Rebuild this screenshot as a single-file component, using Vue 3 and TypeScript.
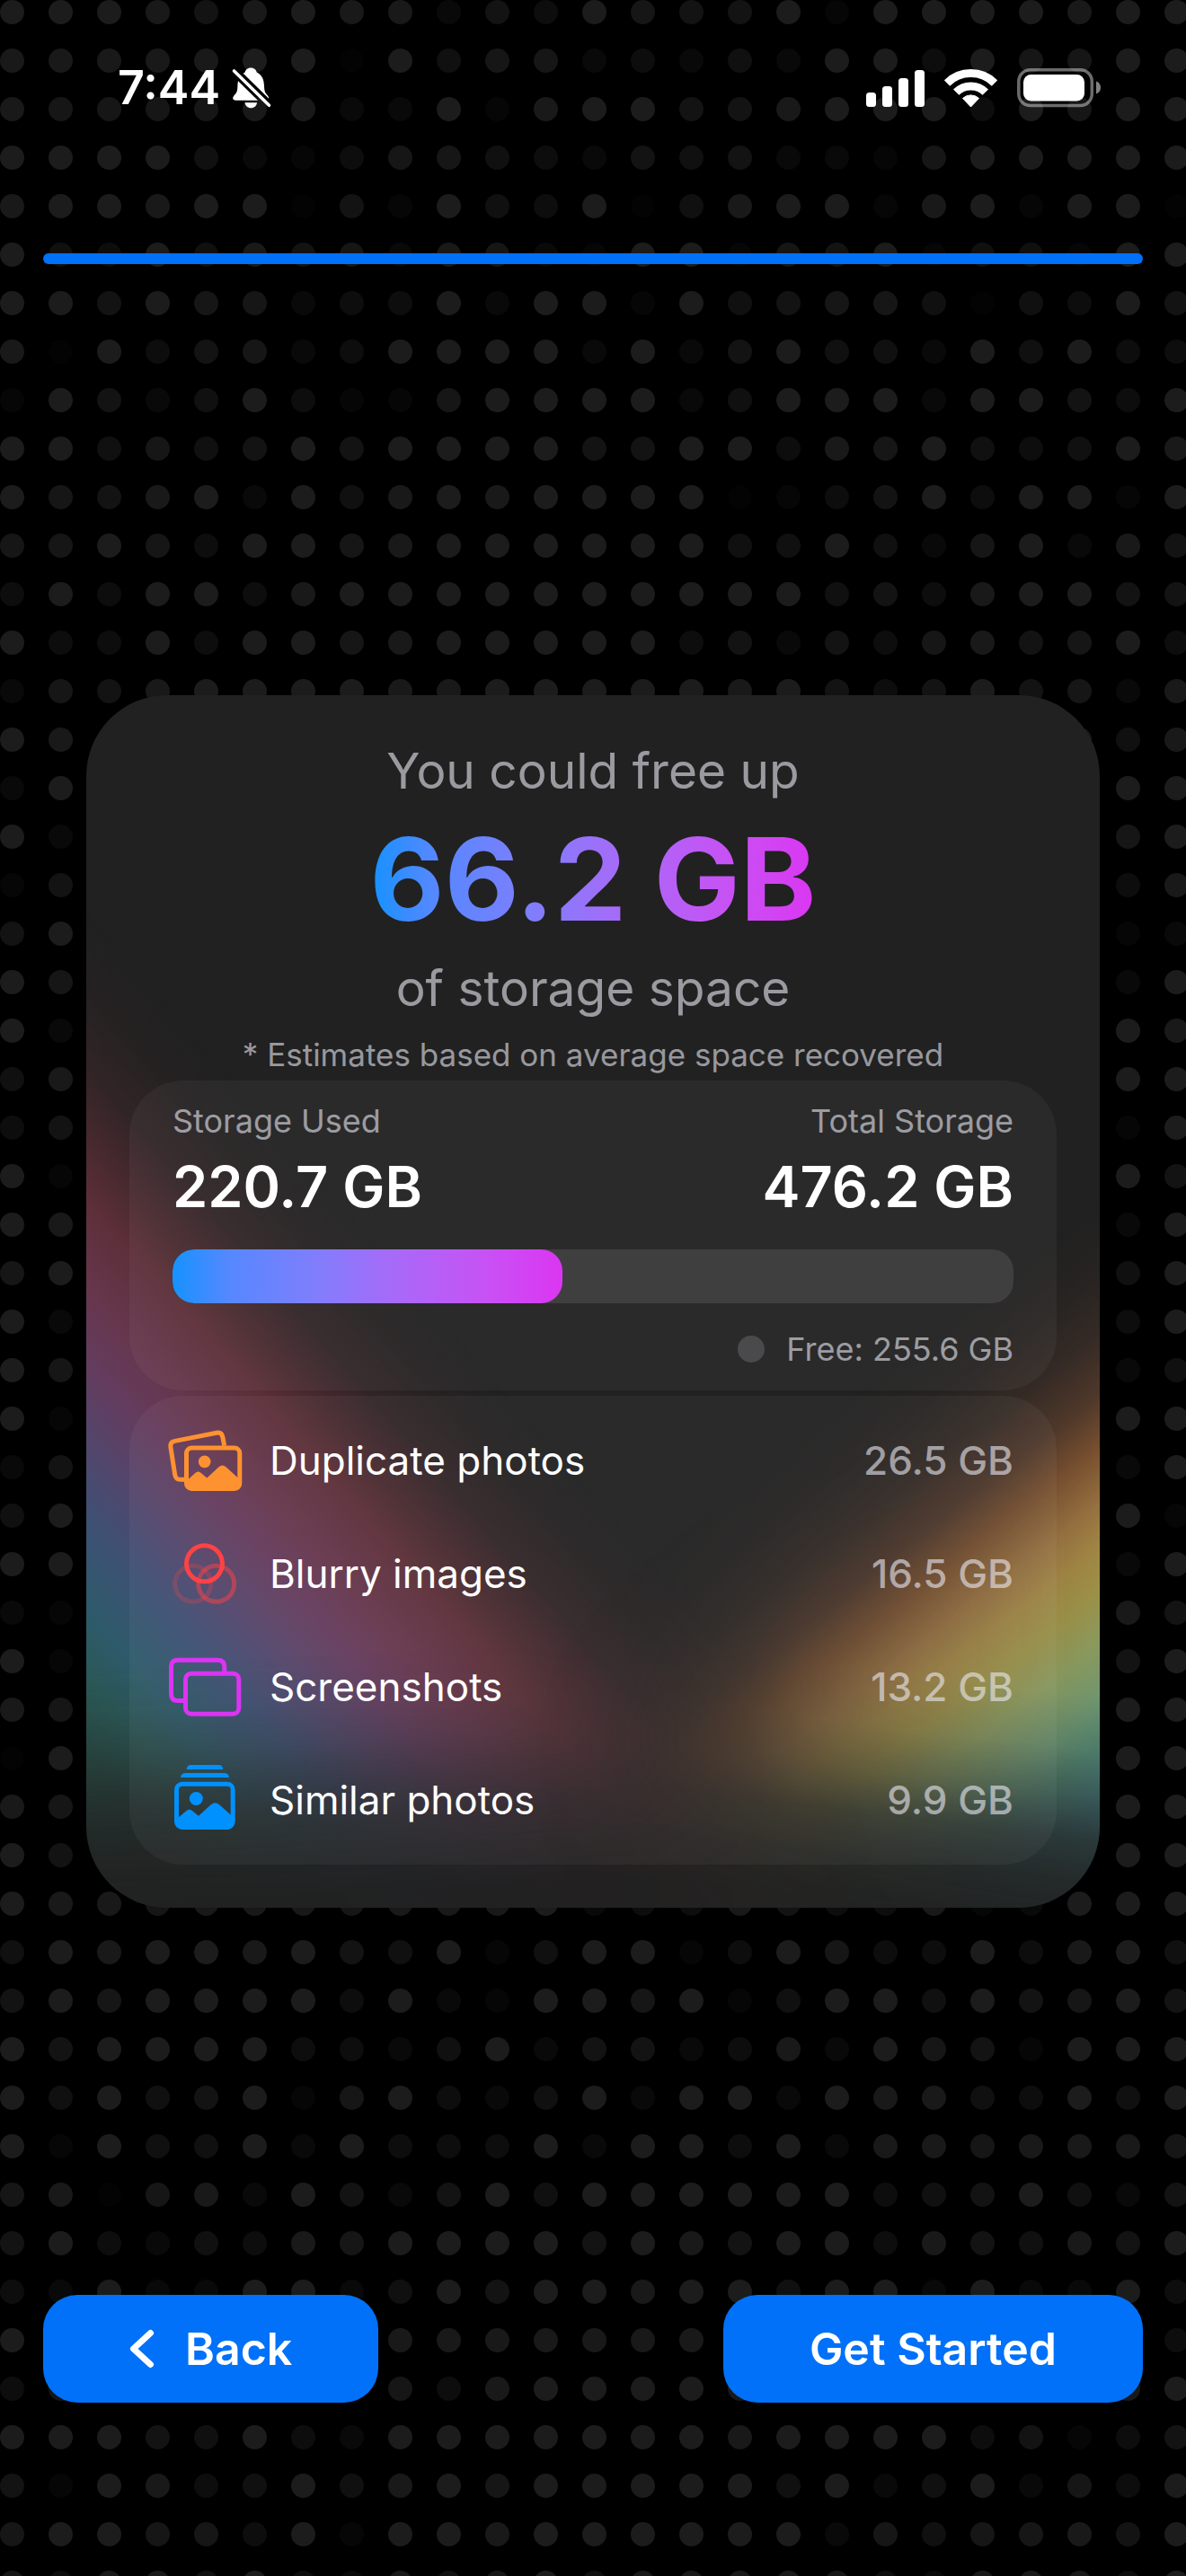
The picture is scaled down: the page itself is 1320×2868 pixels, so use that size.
<script setup lang="ts">
import { computed } from 'vue'

type IconName = 'duplicates' | 'blurry' | 'screenshots' | 'similar'

interface Category {
  icon: IconName
  label: string
  size: number
}

const categories: Category[] = [
  { icon: 'duplicates', label: 'Duplicate photos', size: 26.5 },
  { icon: 'blurry', label: 'Blurry images', size: 16.5 },
  { icon: 'screenshots', label: 'Screenshots', size: 13.2 },
  { icon: 'similar', label: 'Similar photos', size: 9.9 },
]

const used = 220.7
const total = 476.2
const free = 255.6
const recoverable = 66.2

const gb = (value: number): string => `${value.toFixed(1)} GB`
const usedShare = computed(() => `${(used / total) * 100}%`)

// Brightness of each backdrop dot, 0 (off) to 9 (brightest).
const topRows = [
  '9998689883649766929999899',
  '8888899195773435399497799',
  '8777788339289966899949799',
  '9999532477543656332799999',
  '8998991629549158992892991',
  '9549586738732992769255299',
  '9969773449399295677515496',
  '8194673499993936955395944',
  '2963594227999935999399649',
  '9957569699996699487954598',
  '9768939589899991246949929',
  '7797499789999995595379386',
  '4949948999999999956489966',
  '9449499789999946364786794',
  '3768999988999998964696738',
]
// Beside the card only two dots on each side stay visible.
const sideRows = [
  '9858', '3999', '9379', '2648', '6923', '9739', '9398', '5899',
  '4629', '9296', '9839', '7959', '9349', '9735', '9299', '3639',
  '5992', '9939', '3286', '9269', '8799', '1999', '8799', '9699',
]
const bottomRows = [
  '9887888788893448644823999',
  '5989989659259924974494895',
  '6979999493299792599596796',
  '9699994435936634839762999',
  '9595692794359399398854959',
  '9295593944493994938878887',
  '7817839636959999994569536',
  '6943548799996986994865869',
  '4393399359699899599393394',
  '9888888888888888888888884',
  '4777777774899998888888889',
  '9996594399999998999946246',
  '6298459589799999593593749',
  '7997749299899999937577869',
  '7488594385795888874388849',
]
const rows = [
  ...topRows,
  ...sideRows.map((r) => r.slice(0, 2) + '8'.repeat(21) + r.slice(2)),
  ...bottomRows,
]
const PITCH = 54
const RADIUS = 13.5
const dots = rows.flatMap((row, y) =>
  [...row].map((level, x) => ({
    cx: x * PITCH + RADIUS,
    cy: y * PITCH + RADIUS,
    opacity: Number(level) * 0.0124,
  })),
)
</script>

<template>
  <div class="screen">
    <svg class="dots" aria-hidden="true">
      <circle
        v-for="(d, i) in dots"
        :key="i"
        :cx="d.cx"
        :cy="d.cy"
        :r="RADIUS"
        fill="#fff"
        :fill-opacity="d.opacity"
      />
    </svg>

    <header class="status">
      <div class="status-group clock">
        <span class="time">7:44</span>
        <svg width="46" height="48" viewBox="0 0 46 48" role="img" aria-label="Silent mode">
          <mask id="bell-cut">
            <rect width="46" height="48" fill="#fff" />
            <path d="M-1 .3 47 47.6" stroke="#000" stroke-width="10" />
          </mask>
          <g fill="#fff" mask="url(#bell-cut)">
            <path d="M22.2 1.5c4 0 6 2.5 6.5 5C35 9.5 36.8 15 37 22c.3 6 1 7 4 10.500c2 2.500 1.500 5.200-2 5.200H5.400c-3.400 0-4-2.700-2-5.200C6.500 29 7.200 28 7.400 22 7.600 15 9.500 9.500 15.700 6.500c.5-2.500 2.500-5 6.500-5z" />
            <path d="M15.500 40.300h13.600c-.6 3.700-3.200 6-6.800 6s-6.200-2.300-6.800-6z" />
          </g>
          <path d="M3.500 5 42.500 43.300" stroke="#fff" stroke-width="3.600" stroke-linecap="round" />
        </svg>
      </div>
      <div class="status-group indicators">
        <svg width="65" height="42" viewBox="0 0 65 42" fill="#fff" role="img" aria-label="Signal">
          <rect x="0" y="26" width="11" height="16" rx="3.500" />
          <rect x="18" y="19" width="11" height="23" rx="3.500" />
          <rect x="36" y="10" width="11" height="32" rx="3.500" />
          <rect x="54" y="1" width="11" height="41" rx="3.500" />
        </svg>
        <svg width="59" height="42" viewBox="0 0 59 42" role="img" aria-label="Wi-Fi">
          <g fill="none" stroke="#fff" stroke-width="9">
            <path d="M3 15.500a37.500 37.500 0 0 1 53 0" />
            <path d="M13.200 25.700a23 23 0 0 1 32.600 0" />
          </g>
          <path d="M29.500 42 20.500 32.500a13 13 0 0 1 18 0z" fill="#fff" stroke="#fff" stroke-linejoin="round" />
        </svg>
        <svg width="93" height="44" viewBox="0 0 93 44" role="img" aria-label="Battery">
          <rect x="1.800" y="1.800" width="81.500" height="39.800" rx="13" fill="none" stroke="#fff" stroke-opacity=".42" stroke-width="3.500" />
          <rect x="7" y="7" width="68" height="29.500" rx="8.500" fill="#fff" />
          <path d="M88 14.500c3 1 5 3.600 5 7s-2 6-5 7z" fill="#fff" fill-opacity=".5" />
        </svg>
      </div>
    </header>

    <div class="progress" role="progressbar" aria-label="Setup progress" aria-valuenow="100" />

    <main class="content">
      <section class="card">
        <header class="summary">
          <p class="lead">You could free up</p>
          <h1 class="amount">{{ gb(recoverable) }}</h1>
          <p class="lead">of storage space</p>
          <p class="note">* Estimates based on average space recovered</p>
        </header>

        <section class="panel usage">
          <div class="pair">
            <div class="stat">
              <span class="caption">Storage Used</span>
              <strong class="figure">{{ gb(used) }}</strong>
            </div>
            <div class="stat end">
              <span class="caption">Total Storage</span>
              <strong class="figure">{{ gb(total) }}</strong>
            </div>
          </div>
          <div class="bar"><div class="bar-fill" :style="{ width: usedShare }" /></div>
          <div class="legend">
            <span class="swatch" />
            <span class="caption">Free: {{ gb(free) }}</span>
          </div>
        </section>

        <ul class="panel list">
          <li v-for="c in categories" :key="c.icon" class="row">
            <svg v-if="c.icon === 'duplicates'" class="icon" viewBox="16 16 84 80" fill="none" stroke="#ff9230" stroke-width="5" aria-hidden="true">
              <path d="M36 77.300h-5q-5.500 0-6.300-5.300L19.900 41q-.8-5.600 4.800-6.600L71 25.200q5.800-1 6.800 4.600l1.900 10" />
              <rect x="37.500" y="42" width="59.300" height="45.500" rx="6" />
              <path d="M39 77.500 47.500 69.800q3-2.400 6 0L60.300 75.500 73.500 63.300q4-3.400 8 0L95 75.500V88H39z" fill="#ff9230" stroke="none" />
              <circle cx="57.700" cy="57.400" r="6.800" fill="#ff9230" stroke="none" />
            </svg>
            <svg v-else-if="c.icon === 'blurry'" class="icon" viewBox="16 142 84 80" fill="none" stroke="#ff4245" stroke-width="5" aria-hidden="true">
              <circle cx="44.700" cy="193.300" r="20" stroke-opacity=".25" />
              <circle cx="70.700" cy="193.300" r="20" stroke-opacity=".5" />
              <circle cx="57.500" cy="170.800" r="20" />
            </svg>
            <svg v-else-if="c.icon === 'screenshots'" class="icon" viewBox="16 18 84 80" fill="none" stroke="#db34f2" stroke-width="5" aria-hidden="true">
              <path d="M35 73.500h-7q-7.500 0-7.500-7.500V35.600q0-7.400 7.500-7.400h44q7.800 0 7.800 7.400V42" />
              <rect x="36.500" y="43.200" width="59.300" height="45" rx="6.500" />
            </svg>
            <svg v-else class="icon" viewBox="16 144 84 80" fill="#0091ff" aria-hidden="true">
              <path d="M37.700 150q.4-5 4.800-5h31q4.400 0 4.800 5z" />
              <path d="M31 159q.6-5 5.600-5h42.800q5 0 5.600 5z" />
              <rect x="26.500" y="166.200" width="62.700" height="48.300" rx="6.500" fill="none" stroke="#0091ff" stroke-width="5" />
              <path d="M28 204 37.500 196q3.200-2.600 6.400 0l7.100 5.700L65 189q4.400-3.600 8.800 0L88 201.500V215H28z" />
              <circle cx="48.300" cy="182.500" r="7.500" />
            </svg>
            <span class="row-label">{{ c.label }}</span>
            <span class="row-size">{{ gb(c.size) }}</span>
          </li>
        </ul>
      </section>
    </main>

    <footer class="actions">
      <button type="button" class="button back">
        <svg width="28" height="44" viewBox="0 0 28 44" fill="none" stroke="#fff" stroke-width="7" stroke-linecap="round" stroke-linejoin="round" aria-hidden="true">
          <path d="M23.500 4.500 4.500 22l19 17.500" />
        </svg>
        Back
      </button>
      <button type="button" class="button next">Get Started</button>
    </footer>
  </div>
</template>

<style>
body {
  margin: 0;
  background: #000;
}
</style>

<style scoped>
.screen {
  --blue: #0071f8;
  --muted: rgba(235, 235, 245, 0.6);
  --spectrum: linear-gradient(90deg, #1592ff, #5488ff 14%, #7f7efc 36%, #a66bf8 56%, #c752f4 80%, #db36f2);
  position: relative;
  display: flex;
  flex-direction: column;
  min-height: 100vh;
  overflow: hidden;
  background: #000;
  color: #fff;
  font-family: Inter, 'Liberation Sans', sans-serif;
}

.dots {
  position: absolute;
  inset: 0;
  width: 100%;
  height: 100%;
}

.status,
.progress,
.content,
.actions {
  position: relative;
}

.status {
  display: flex;
  justify-content: space-between;
  padding: 74px 95px 160px 131px;
}

.status-group {
  display: flex;
  align-items: center;
  height: 48px;
}

.clock {
  gap: 12px;
}

.indicators {
  gap: 22px;
}

.time {
  font-size: 52px;
  font-weight: 600;
  line-height: 48px;
}

.progress {
  height: 12px;
  margin: 0 48px;
  border-radius: 6px;
  background: var(--blue);
}

.content {
  display: flex;
  flex: 1;
  flex-direction: column;
  justify-content: center;
  padding: 48px 96px 0;
}

.card {
  position: relative;
  display: flex;
  flex-direction: column;
  gap: 6px;
  padding: 48px;
  overflow: hidden;
  border-radius: 90px;
  background: #212121;
}

/* Coloured glows rising from the two lower corners. */
.card::before,
.card::after {
  content: '';
  position: absolute;
  inset: 0;
}

.card::before {
  background: linear-gradient(
    49deg,
    #2a5048 110px,
    #2b5957 165px,
    #2d5a69 215px,
    #3d5073 285px,
    #52466c 340px,
    #643c5e 400px,
    #66364c 455px,
    #5c2f38 520px,
    rgba(92, 46, 54, 0.64) 565px,
    rgba(92, 46, 54, 0.28) 615px,
    rgba(92, 46, 54, 0.08) 670px,
    rgba(92, 46, 54, 0) 730px
  );
  mask-image: linear-gradient(
    -3deg,
    rgba(0, 0, 0, 0.03) 60px,
    rgba(0, 0, 0, 0.08) 100px,
    rgba(0, 0, 0, 0.21) 145px,
    rgba(0, 0, 0, 0.42) 185px,
    rgba(0, 0, 0, 0.7) 230px,
    rgba(0, 0, 0, 0.9) 275px,
    #000 330px
  );
}

.card::after {
  background: linear-gradient(
    -38deg,
    #488083 90px,
    #548a76 140px,
    #6d9570 180px,
    #8a9a5e 232px,
    #9c9148 279px,
    #a08544 318px,
    #967040 355px,
    rgba(133, 87, 49, 0.86) 405px,
    rgba(117, 75, 50, 0.56) 450px,
    rgba(110, 70, 50, 0.26) 505px,
    rgba(110, 70, 50, 0.08) 560px,
    rgba(110, 70, 50, 0) 620px
  );
  mask-image:
    linear-gradient(
      7deg,
      rgba(0, 0, 0, 0.03) 110px,
      rgba(0, 0, 0, 0.09) 160px,
      rgba(0, 0, 0, 0.26) 212px,
      rgba(0, 0, 0, 0.6) 262px,
      rgba(0, 0, 0, 0.86) 310px,
      #000 370px
    ),
    linear-gradient(
      270deg,
      #000,
      rgba(0, 0, 0, 0.86) 220px,
      rgba(0, 0, 0, 0.76) 330px,
      rgba(0, 0, 0, 0.45) 450px,
      rgba(0, 0, 0, 0.15) 540px,
      transparent 640px
    );
  mask-composite: intersect;
}

.summary,
.panel {
  position: relative;
  z-index: 1;
}

.summary {
  display: flex;
  flex-direction: column;
  align-items: center;
  gap: 6px;
}

.summary p,
.summary h1 {
  margin: 0;
}

.lead {
  color: var(--muted);
  font-size: 55px;
  line-height: 72px;
}

.amount {
  background: var(--spectrum);
  background-clip: text;
  color: transparent;
  font-size: 128px;
  font-weight: 700;
  line-height: 158px;
}

.summary .note {
  margin-top: 10px;
  color: var(--muted);
  font-size: 35px;
  line-height: 45px;
}

.panel {
  border-radius: 60px;
  background: rgba(255, 255, 255, 0.045);
}

.usage {
  display: flex;
  flex-direction: column;
  gap: 30px;
  padding: 24px 48px 25px;
}

.pair {
  display: flex;
  justify-content: space-between;
}

.stat {
  display: flex;
  flex-direction: column;
  gap: 12px;
}

.end {
  align-items: flex-end;
}

.caption {
  color: var(--muted);
  font-size: 36px;
  line-height: 42px;
}

.figure {
  font-size: 63px;
  font-weight: 600;
  line-height: 80px;
}

.bar {
  height: 60px;
  overflow: hidden;
  border-radius: 24px;
  background: #3f3f3f;
}

.bar-fill {
  height: 100%;
  border-radius: 24px;
  background: var(--spectrum);
}

.legend {
  display: flex;
  align-items: center;
  justify-content: flex-end;
  gap: 24px;
}

.swatch {
  width: 30px;
  height: 30px;
  border-radius: 50%;
  background: #4a4a4c;
}

.list {
  margin: 0;
  padding: 9px 48px 9px 42px;
  list-style: none;
}

.row {
  display: flex;
  align-items: center;
  height: 126px;
  font-size: 44px;
}

.icon {
  width: 84px;
  height: 80px;
  margin-right: 30px;
}

.row-label {
  flex: 1;
}

.row-size {
  color: var(--muted);
  font-weight: 500;
}

.actions {
  display: flex;
  justify-content: space-between;
  padding: 0 48px 193px;
}

.button {
  display: flex;
  align-items: center;
  justify-content: center;
  height: 120px;
  padding: 0 96px;
  border: 0;
  border-radius: 38px;
  background: var(--blue);
  color: #fff;
  font: 600 50px/60px Inter, 'Liberation Sans', sans-serif;
}

.back {
  gap: 34px;
}
</style>
